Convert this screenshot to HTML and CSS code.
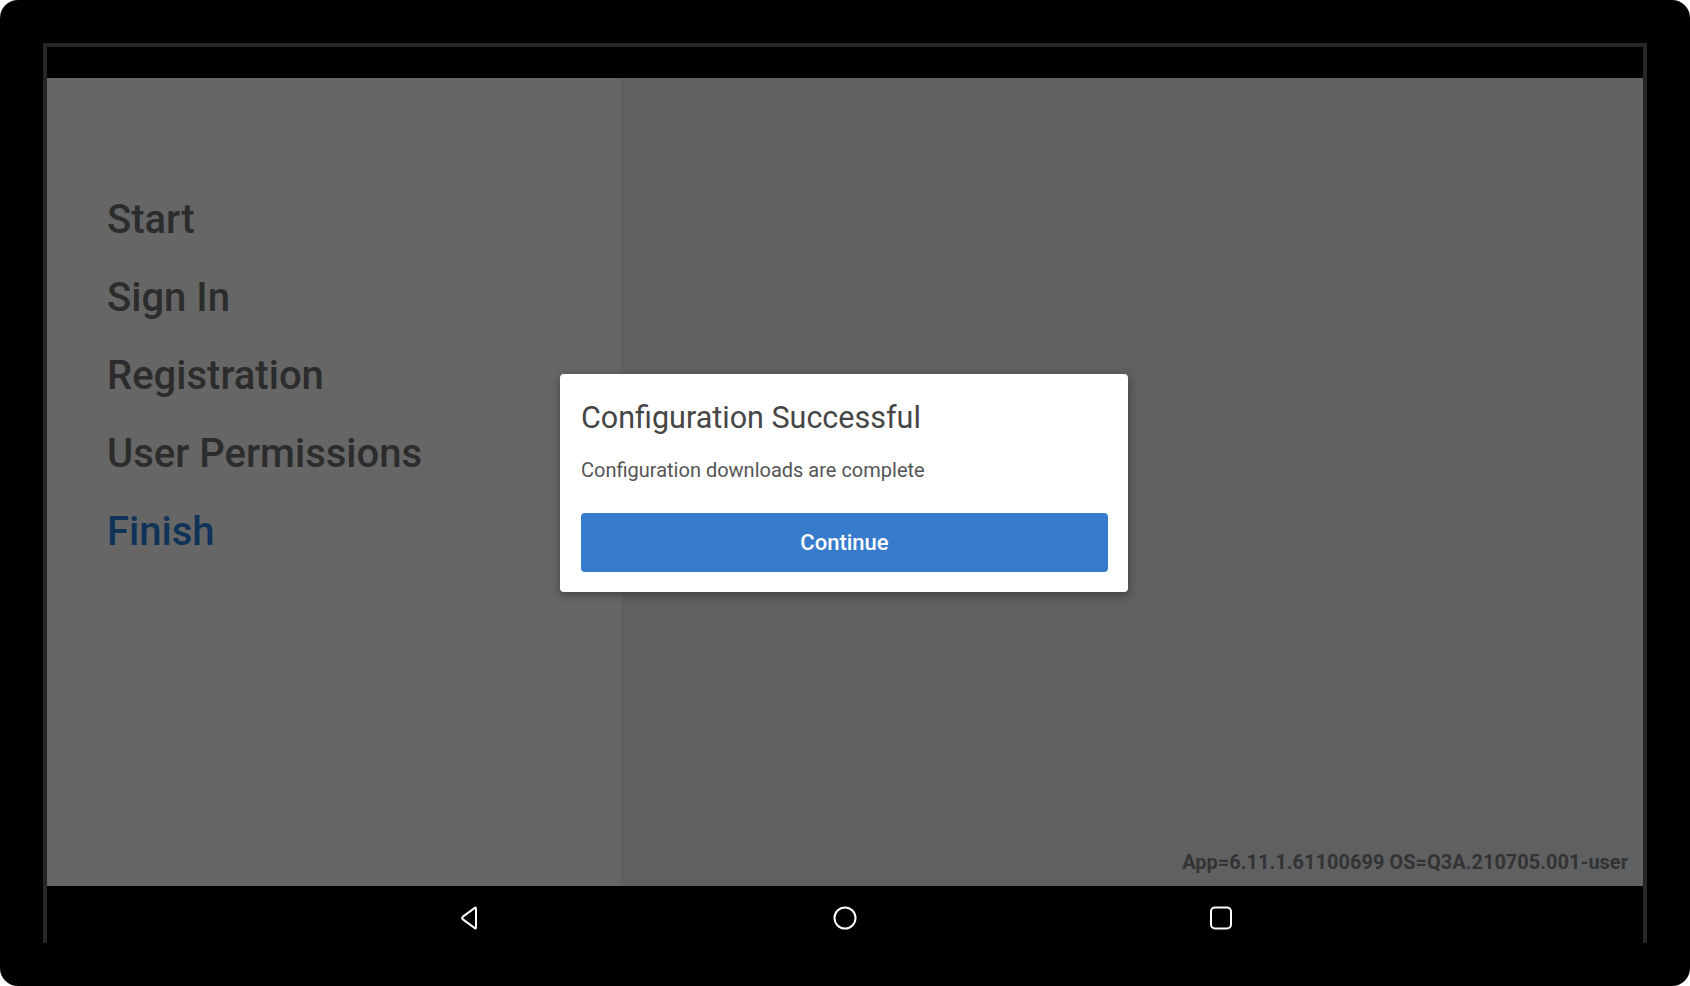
FILE: index.html
```html
<!DOCTYPE html>
<html lang="en">
<head>
<meta charset="utf-8">
<title>Configuration Successful</title>
<link rel="stylesheet" href="styles.css">
</head>
<body>
<div class="device">
  <div class="screen">
    <div class="status-bar"></div>
    <div class="content">
      <div class="steps">
        <div class="step">Start</div>
        <div class="step">Sign In</div>
        <div class="step">Registration</div>
        <div class="step">User Permissions</div>
        <div class="step step-active">Finish</div>
      </div>
      <div class="main">
        <div class="version">App=6.11.1.61100699 OS=Q3A.210705.001-user</div>
      </div>
      <div class="overlay">
        <div class="dialog">
          <div class="dialog-title">Configuration Successful</div>
          <div class="dialog-body">Configuration downloads are complete</div>
          <button class="dialog-button">Continue</button>
        </div>
      </div>
    </div>
    <div class="nav-bar">
      <div class="nav-item">
        <svg width="18" height="24" viewBox="0 0 18 24"><path d="M16 2.5 L16 21.5 Q16 23 14.8 22.1 L2.6 13.1 Q1.5 12 2.6 10.9 L14.8 1.9 Q16 1 16 2.5 Z" fill="none" stroke="#fff" stroke-width="2" stroke-linejoin="round"/></svg>
      </div>
      <div class="nav-item">
        <svg width="24" height="24" viewBox="0 0 24 24"><circle cx="12" cy="12" r="10.5" fill="none" stroke="#fff" stroke-width="2"/></svg>
      </div>
      <div class="nav-item">
        <svg width="24" height="24" viewBox="0 0 24 24"><rect x="2" y="1.5" width="20" height="21" rx="4" fill="none" stroke="#fff" stroke-width="2"/></svg>
      </div>
    </div>
  </div>
</div>
</body>
</html>
```

FILE: styles.css
```css
html, body {
  margin: 0;
  padding: 0;
  background: #ffffff;
}

body {
  font-family: Roboto, "Liberation Sans", sans-serif;
}

.device {
  width: 1690px;
  height: 986px;
  background: #000000;
  border-radius: 18px;
  padding: 43px 43px 0 43px;
  box-sizing: border-box;
  overflow: hidden;
}

.screen {
  width: 1604px;
  height: 900px;
  border: 4px solid #262626;
  border-bottom: none;
  box-sizing: border-box;
  display: flex;
  flex-direction: column;
}

.status-bar {
  height: 31px;
  background: #000000;
  flex: none;
}

.content {
  height: 808px;
  flex: none;
  display: grid;
  grid-template-columns: 574px 1fr;
  position: relative;
}

.steps {
  background: #666666;
  padding: 103px 0 0 60px;
}

.step {
  font-size: 40px;
  line-height: 78px;
  font-weight: 500;
  color: #2c2c2c;
  white-space: nowrap;
}

.step-active {
  color: #0f3258;
}

.main {
  background: #5f6062;
  display: flex;
  flex-direction: column;
  justify-content: flex-end;
  align-items: flex-end;
  padding: 0 15px 12px 0;
}

.version {
  font-size: 20px;
  line-height: 24px;
  font-weight: 700;
  color: #333333;
  white-space: nowrap;
}

.overlay {
  position: absolute;
  inset: 0;
  display: flex;
  align-items: center;
  justify-content: center;
}

.dialog {
  width: 568px;
  box-sizing: border-box;
  background: #ffffff;
  border-radius: 4px;
  box-shadow: 0 3px 10px rgba(0, 0, 0, 0.35);
  padding: 26px 20px 20px 21px;
  display: flex;
  flex-direction: column;
  margin-left: -2px;
  margin-top: 1px;
}

.dialog-title {
  font-size: 30.5px;
  line-height: 36px;
  font-weight: 400;
  color: #464646;
}

.dialog-body {
  margin-top: 22px;
  font-size: 20px;
  line-height: 24px;
  color: #555555;
}

.dialog-button {
  margin-top: 31px;
  height: 59px;
  border: none;
  border-radius: 4px;
  background: #367bcc;
  color: #ffffff;
  font-family: Roboto, "Liberation Sans", sans-serif;
  font-size: 22px;
  font-weight: 500;
  padding: 0;
}

.nav-bar {
  flex: 1;
  background: #000000;
  display: flex;
  justify-content: center;
  align-items: flex-start;
  gap: 336px;
  padding-top: 20px;
}

.nav-item {
  width: 40px;
  height: 24px;
  display: flex;
  justify-content: center;
  align-items: center;
}
```
